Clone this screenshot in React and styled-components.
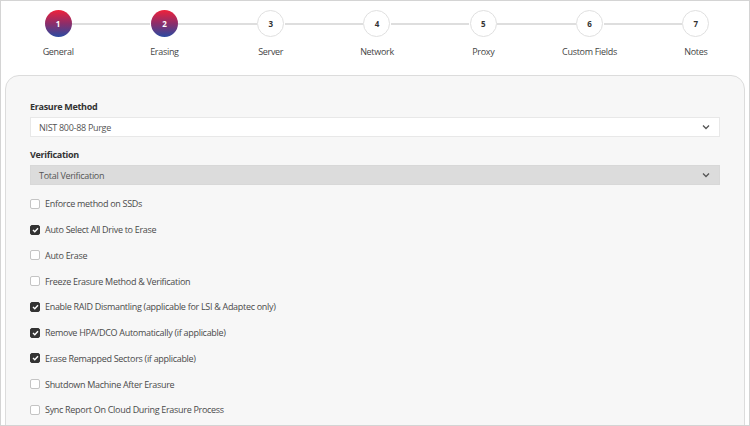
import React from "react";
import styled, { createGlobalStyle } from "styled-components";

const Global = createGlobalStyle`
  html, body { margin: 0; padding: 0; background: #fff; }
  body { font-family: "Open Sans", "Liberation Sans", sans-serif; }
  * { box-sizing: border-box; }
`;

const Frame = styled.div`
  width: 750px;
  height: 426px;
  border: 1px solid #d4d4d4;
  overflow: hidden;
  background: #fff;
`;

const Stepper = styled.div`
  display: grid;
  grid-template-columns: repeat(7, 1fr);
  padding: 9px 0 0 4px;
  height: 74px;
`;

const Step = styled.div`
  position: relative;
  display: flex;
  flex-direction: column;
  align-items: center;
  &::after {
    content: "";
    display: ${(p) => (p.$last ? "none" : "block")};
    position: absolute;
    top: 13px;
    left: calc(50% + 14px);
    width: calc(100% - 28px);
    height: 1.5px;
    background: #dedede;
  }
`;

const Circle = styled.div`
  width: 27px;
  height: 27px;
  border-radius: 50%;
  display: flex;
  align-items: center;
  justify-content: center;
  font-size: 8px;
  font-weight: 700;
  color: ${(p) => (p.$active ? "#fff" : "#333")};
  background: ${(p) =>
    p.$active ? "linear-gradient(180deg, #f0213a 0%, #8c2e6a 50%, #2a4aa2 100%)" : "#fff"};
  border: ${(p) => (p.$active ? "none" : "1.5px solid #e0e0e0")};
`;

const StepLabel = styled.div`
  margin-top: 8px;
  font-size: 9px;
  letter-spacing: -0.3px;
  color: #444;
  line-height: 14px;
  white-space: nowrap;
`;

const Card = styled.div`
  margin: 0 4px;
  border: 1px solid #dcdcdc;
  border-radius: 14px;
  background: #f7f7f7;
  padding: 24px 24px 40px 24px;
  height: 400px;
`;

const FieldLabel = styled.div`
  font-size: 9px;
  letter-spacing: -0.3px;
  font-weight: 700;
  color: #333;
  line-height: 14px;
  margin-bottom: 3px;
`;

const Select = styled.div`
  height: 20px;
  display: flex;
  align-items: center;
  justify-content: space-between;
  padding: 0 9px 0 8px;
  background: ${(p) => (p.$disabled ? "#dcdcdc" : "#fff")};
  border: 1px solid ${(p) => (p.$disabled ? "#d8d8d8" : "#e8e8e8")};
  font-size: 9px;
  letter-spacing: -0.3px;
  color: #555;
  margin-bottom: ${(p) => p.$mb || 0}px;
`;

const Chevron = () => (
  <svg width="8" height="6" viewBox="0 0 8 6">
    <polyline points="1,1.5 4,4.5 7,1.5" fill="none" stroke="#555" strokeWidth="1.3" />
  </svg>
);

const Options = styled.div`
  display: flex;
  flex-direction: column;
  margin-top: 6px;
`;

const Row = styled.label`
  height: 25.75px;
  display: flex;
  align-items: center;
  gap: 5px;
  font-size: 9px;
  letter-spacing: -0.3px;
  color: #4a4a4a;
`;

const Box = styled.span`
  width: 10px;
  height: 10px;
  border-radius: 2px;
  display: inline-flex;
  align-items: center;
  justify-content: center;
  background: ${(p) => (p.$checked ? "#333" : "#fff")};
  border: 1px solid ${(p) => (p.$checked ? "#333" : "#c4c4c4")};
  flex-shrink: 0;
`;

const Check = () => (
  <svg width="7" height="6" viewBox="0 0 7 6">
    <polyline points="1,3 2.8,4.8 6,1.2" fill="none" stroke="#fff" strokeWidth="1.4" />
  </svg>
);

const steps = ["General", "Erasing", "Server", "Network", "Proxy", "Custom Fields", "Notes"];

const options = [
  ["Enforce method on SSDs", false],
  ["Auto Select All Drive to Erase", true],
  ["Auto Erase", false],
  ["Freeze Erasure Method & Verification", false],
  ["Enable RAID Dismantling (applicable for LSI & Adaptec only)", true],
  ["Remove HPA/DCO Automatically (if applicable)", true],
  ["Erase Remapped Sectors (if applicable)", true],
  ["Shutdown Machine After Erasure", false],
  ["Sync Report On Cloud During Erasure Process", false],
];

export default function App() {
  return (
    <>
      <Global />
      <Frame>
        <Stepper>
          {steps.map((s, i) => (
            <Step key={s} $last={i === steps.length - 1}>
              <Circle $active={i < 2}>{i + 1}</Circle>
              <StepLabel>{s}</StepLabel>
            </Step>
          ))}
        </Stepper>
        <Card>
          <FieldLabel>Erasure Method</FieldLabel>
          <Select $mb={11}>
            <span>NIST 800-88 Purge</span>
            <Chevron />
          </Select>
          <FieldLabel>Verification</FieldLabel>
          <Select $disabled>
            <span>Total Verification</span>
            <Chevron />
          </Select>
          <Options>
            {options.map(([t, c]) => (
              <Row key={t}>
                <Box $checked={c}>{c && <Check />}</Box>
                <span>{t}</span>
              </Row>
            ))}
          </Options>
        </Card>
      </Frame>
    </>
  );
}
